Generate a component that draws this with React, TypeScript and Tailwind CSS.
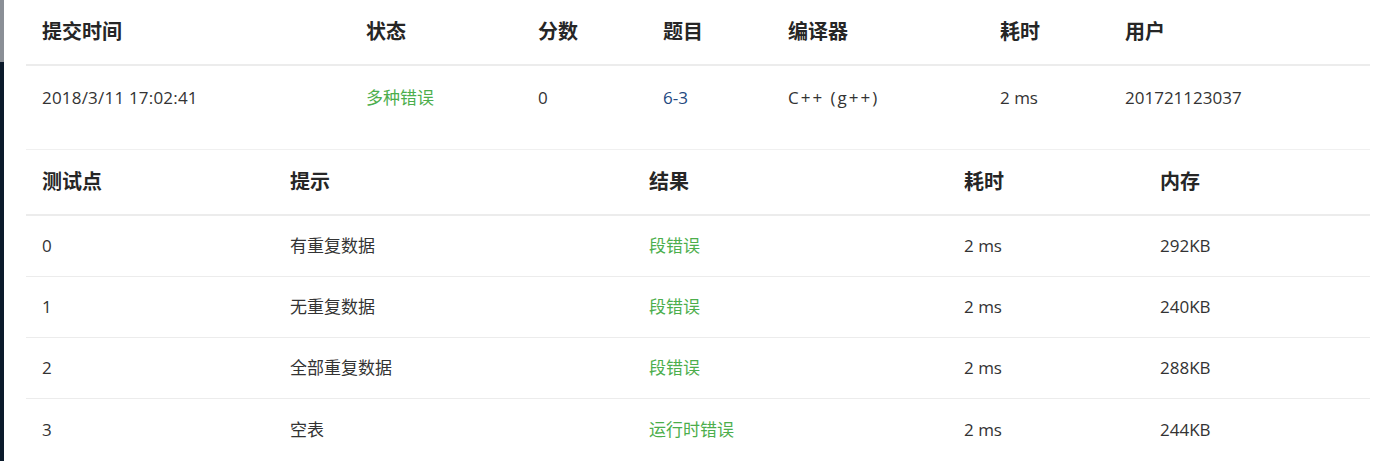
import React from "react";

const font = { fontFamily: '"Open Sans", "Noto Sans CJK SC", "Noto Sans", sans-serif' };

const sub = [
  ["0", "有重复数据", "段错误", "2 ms", "292KB"],
  ["1", "无重复数据", "段错误", "2 ms", "240KB"],
  ["2", "全部重复数据", "段错误", "2 ms", "288KB"],
  ["3", "空表", "运行时错误", "2 ms", "244KB"],
];

export default function App() {
  return (
    <div className="flex w-[1378px] h-[461px] bg-white overflow-hidden" style={font}>
      <div className="w-[4px] flex flex-col shrink-0">
        <div className="h-[62px] bg-[#8a8f96]" />
        <div className="flex-1 bg-[#0b1a2b]" />
      </div>
      <div className="flex-1 pl-[22px] pr-[8px]">
        <div className="grid grid-cols-[324px_172px_125px_125px_212px_125px_1fr] text-[17px] text-[#333]">
          {["提交时间", "状态", "分数", "题目", "编译器", "耗时", "用户"].map((h) => (
            <div key={h} className="h-[66px] flex items-center pl-[16px] font-bold text-[20px] text-[#262626] border-b-2 border-[#ececec]">
              {h}
            </div>
          ))}
          <div className="h-[63px] flex items-center pl-[16px] tracking-[0.2px]">2018/3/11 17:02:41</div>
          <div className="h-[63px] flex items-center pl-[16px] text-[#4cae4c]">多种错误</div>
          <div className="h-[63px] flex items-center pl-[16px]">0</div>
          <div className="h-[63px] flex items-center pl-[16px] text-[#23497f]">6-3</div>
          <div className="h-[63px] flex items-center pl-[16px] tracking-[2px]">C++ (g++)</div>
          <div className="h-[63px] flex items-center pl-[16px]">2 ms</div>
          <div className="h-[63px] flex items-center pl-[16px]">201721123037</div>
        </div>
        <div className="mt-[20px] border-t border-[#f0f0f0] grid grid-cols-[248px_359px_315px_196px_1fr] text-[17px] text-[#333]">
          {["测试点", "提示", "结果", "耗时", "内存"].map((h) => (
            <div key={h} className="h-[66px] flex items-center pl-[16px] font-bold text-[20px] text-[#262626] border-b-2 border-[#ececec]">
              {h}
            </div>
          ))}
          {sub.map((r, i) =>
            r.map((c, j) => (
              <div
                key={i + "-" + j}
                className={
                  "h-[61px] flex items-center pl-[16px] " +
                  (i < sub.length - 1 ? "border-b border-[#ececec] " : "") +
                  (j === 2 ? "text-[#4cae4c]" : "")
                }
              >
                {c}
              </div>
            ))
          )}
        </div>
      </div>
    </div>
  );
}
